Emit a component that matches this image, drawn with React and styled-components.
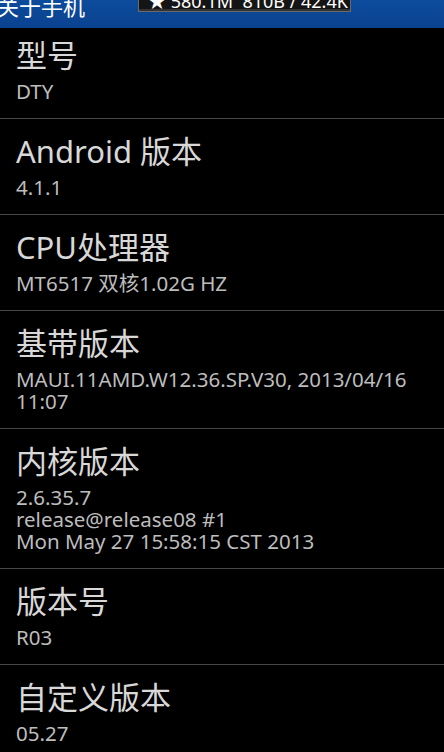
import React from 'react';
import styled, { createGlobalStyle } from 'styled-components';

const GlobalStyle = createGlobalStyle`
  html, body {
    margin: 0;
    padding: 0;
    background: #000;
  }
  body {
    font-family: "Noto Sans", "Noto Sans CJK SC", sans-serif;
  }
`;

const items = [
  { title: '型号', lines: ['DTY'] },
  { title: 'Android 版本', lines: ['4.1.1'] },
  { title: 'CPU处理器', lines: ['MT6517 双核1.02G HZ'] },
  { title: '基带版本', lines: ['MAUI.11AMD.W12.36.SP.V30, 2013/04/16 11:07'] },
  { title: '内核版本', lines: ['2.6.35.7', 'release@release08 #1', 'Mon May 27 15:58:15 CST 2013'] },
  { title: '版本号', lines: ['R03'] },
  { title: '自定义版本', lines: ['05.27'] },
];

function App() {
  return (
    <>
      <GlobalStyle />
      <Screen>
        <TitleBar>
          <BarTitle>关于手机</BarTitle>
          <Stats>★ 580.1M&nbsp;&nbsp;810B / 42.4K</Stats>
        </TitleBar>
        <List>
          {items.map((item) => (
            <Item key={item.title}>
              <ItemTitle>{item.title}</ItemTitle>
              {item.lines.map((line) => (
                <ItemValue key={line}>{line}</ItemValue>
              ))}
            </Item>
          ))}
        </List>
      </Screen>
    </>
  );
}

export default App;

const Screen = styled.div`
  width: 444px;
  height: 752px;
  overflow: hidden;
  background: #000;
  display: flex;
  flex-direction: column;
`;

const TitleBar = styled.div`
  height: 28px;
  flex: 0 0 28px;
  background: linear-gradient(#0d4b9c, #0a4290);
  display: flex;
  align-items: flex-start;
  overflow: hidden;
`;

const BarTitle = styled.div`
  color: #fff;
  font-size: 22px;
  line-height: 26px;
  margin-top: -7px;
  margin-left: -3px;
  white-space: nowrap;
`;

const Stats = styled.div`
  margin-left: 53px;
  margin-top: -9px;
  width: 213px;
  height: 21px;
  box-sizing: border-box;
  background: #151515;
  border: 1px solid #6a6a6a;
  border-top: none;
  box-shadow: inset 0 -2px 0 #333;
  color: #fff;
  font-size: 18px;
  line-height: 20px;
  padding-left: 9px;
  white-space: nowrap;
`;

const List = styled.div`
  display: flex;
  flex-direction: column;
`;

const Item = styled.div`
  padding: 12px 16px 16px;
  border-bottom: 1px solid #474747;
  &:first-child {
    padding-top: 7px;
  }
`;

const ItemTitle = styled.div`
  color: #d8d8d8;
  font-size: 31px;
  line-height: 40px;
  margin-bottom: 5px;
  white-space: nowrap;
`;

const ItemValue = styled.div`
  color: #bdbdbd;
  font-size: 20.5px;
  line-height: 22px;
`;
